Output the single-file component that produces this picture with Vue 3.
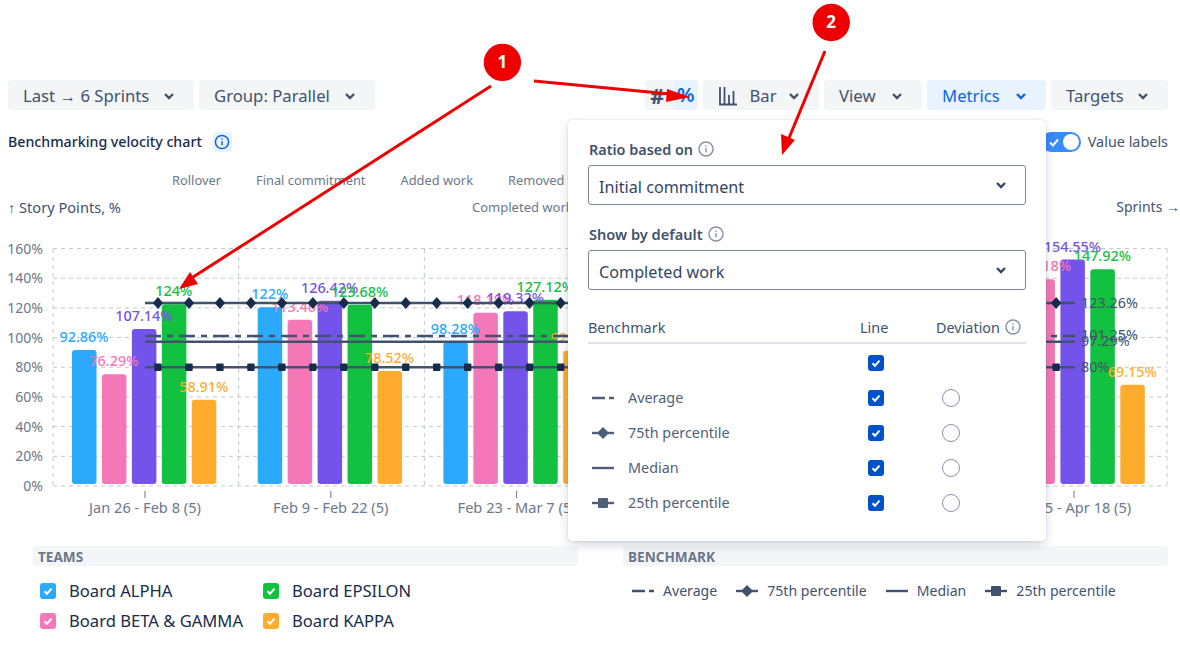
<template>
  <div class="page">
    <div class="toolbar">
      <button class="btn">Last → 6 Sprints <svg class="chev" viewBox="0 0 12 12"><path d="M2 4l4 4 4-4" /></svg></button>
      <button class="btn">Group: Parallel <svg class="chev" viewBox="0 0 12 12"><path d="M2 4l4 4 4-4" /></svg></button>
      <div class="spacer"></div>
      <div class="ratio"><span class="ratio-num">#</span><span class="ratio-pct">%</span></div>
      <button class="btn btn-bar">
        <svg class="bar-icon" viewBox="0 0 20 20"><path d="M2 1v17.5h17M6.5 1v17.5M11 9v9.5M15.5 5v13.5" /></svg>
        Bar <svg class="chev" viewBox="0 0 12 12"><path d="M2 4l4 4 4-4" /></svg>
      </button>
      <button class="btn btn-view">View <svg class="chev" viewBox="0 0 12 12"><path d="M2 4l4 4 4-4" /></svg></button>
      <button class="btn btn-active">Metrics <svg class="chev" viewBox="0 0 12 12"><path d="M2 4l4 4 4-4" /></svg></button>
      <button class="btn btn-targets">Targets <svg class="chev" viewBox="0 0 12 12"><path d="M2 4l4 4 4-4" /></svg></button>
    </div>

    <div class="title-row">
      <span class="title">Benchmarking velocity chart</span>
      <span class="title-info">
        <svg viewBox="0 0 16 16" width="16" height="16"><circle cx="8" cy="8" r="6.6" /><path d="M8 7.2v4M8 4.4v1.4" /></svg>
      </span>
      <div class="spacer"></div>
      <span class="toggle">
        <svg viewBox="0 0 12 12" width="12" height="12"><path d="M2 6.5l3 3 5-6" /></svg>
        <i class="knob"></i>
      </span>
      <span class="toggle-label">Value labels</span>
    </div>

    <div class="metric-row">
      <span v-for="m in metricNames" :key="m">{{ m }}</span>
    </div>

    <div class="axis-row">
      <span>↑ Story Points, %</span>
      <span class="axis-mid">Completed work</span>
      <span class="axis-end">Sprints →</span>
    </div>

    <svg class="chart" viewBox="0 230 1180 300" width="1180" height="300">
      <g class="grid">
        <line v-for="t in yTicks" :key="'h' + t" x1="53" x2="1167" :y1="yPos(t)" :y2="yPos(t)" />
        <line v-for="i in 7" :key="'v' + i" :x1="53 + (i - 1) * 185.67" :x2="53 + (i - 1) * 185.67" y1="249" y2="486" />
      </g>
      <text v-for="t in yTicks" :key="'yl' + t" class="y-label" x="43" :y="yPos(t) + 5">{{ t }}%</text>

      <g v-for="(g, gi) in groups" :key="g.label">
        <rect
          v-for="(v, i) in g.values"
          :key="i"
          :x="barX(gi, i)"
          :y="barTop(v)"
          width="24.5"
          :height="484 - barTop(v)"
          rx="3"
          :fill="colors[i]"
        />
        <line class="tick" :x1="145 + gi * 185.8" :x2="145 + gi * 185.8" y1="491" y2="498" />
        <text class="x-label" :x="145 + gi * 185.8" y="513">{{ g.label }}</text>
      </g>

      <g v-for="(g, gi) in groups" :key="'l' + g.label">
        <text
          v-for="(v, i) in g.values"
          :key="i"
          class="value"
          :x="barX(gi, i) + 12"
          :y="barTop(v) - 8"
          :fill="colors[i]"
        >{{ v }}%</text>
      </g>

      <g class="bench">
        <line x1="145" x2="1075" y1="303" y2="303" />
        <line x1="145" x2="1075" y1="336" y2="336" stroke-dasharray="16 6 6 6" />
        <line x1="145" x2="1075" y1="341.7" y2="341.7" />
        <line x1="145" x2="1075" y1="367.3" y2="367.3" />
      </g>
      <g v-for="x in markerXs" :key="x" class="marker">
        <path :d="`M${x} 297l5.2 6-5.2 6-5.2-6z`" />
        <rect :x="x - 3.7" y="363.6" width="7.4" height="7.4" rx="1" />
      </g>
      <text v-for="b in benchLabels" :key="b.text" class="bench-label" x="1081" :y="b.y">{{ b.text }}</text>
    </svg>

    <div class="legends">
      <section>
        <h4>TEAMS</h4>
        <div class="team-grid">
          <label v-for="t in teams" :key="t.name" class="team">
            <span class="team-check" :style="{ background: t.color }">
              <svg viewBox="0 0 12 12" width="12" height="12"><path d="M2.5 6.2l2.5 2.5 4.5-5" /></svg>
            </span>
            <span class="team-name">{{ t.name }}</span>
          </label>
        </div>
      </section>
      <section>
        <h4>BENCHMARK</h4>
        <div class="bench-legend">
          <span v-for="b in benchmarks" :key="b.name" class="bench-item">
            <svg class="glyph" viewBox="0 0 22 12" width="22" height="12"><path class="glyph-line" :d="b.line" /><path v-if="b.marker" class="glyph-mark" :d="b.marker" /></svg>
            {{ b.name }}
          </span>
        </div>
      </section>
    </div>

    <!-- metrics dropdown, open over the chart -->
    <div class="popover">
      <div class="field-label">Ratio based on
        <svg class="info" viewBox="0 0 16 16" width="16" height="16"><circle cx="8" cy="8" r="7" /><path d="M8 7.2v4M8 4.4v1.4" /></svg>
      </div>
      <div class="select">Initial commitment <svg class="chev" viewBox="0 0 12 12"><path d="M2 4l4 4 4-4" /></svg></div>
      <div class="field-label second">Show by default
        <svg class="info" viewBox="0 0 16 16" width="16" height="16"><circle cx="8" cy="8" r="7" /><path d="M8 7.2v4M8 4.4v1.4" /></svg>
      </div>
      <div class="select">Completed work <svg class="chev" viewBox="0 0 12 12"><path d="M2 4l4 4 4-4" /></svg></div>

      <div class="table-head">
        <span>Benchmark</span>
        <span>Line</span>
        <span class="dev">Deviation
          <svg class="info" viewBox="0 0 16 16" width="16" height="16"><circle cx="8" cy="8" r="7" /><path d="M8 7.2v4M8 4.4v1.4" /></svg>
        </span>
      </div>
      <div class="table-row">
        <span></span>
        <span class="cb"><svg viewBox="0 0 12 12" width="12" height="12"><path d="M2.5 6.2l2.5 2.5 4.5-5" /></svg></span>
        <span></span>
      </div>
      <div v-for="b in benchmarks" :key="b.name" class="table-row">
        <span class="row-name">
          <svg class="glyph" viewBox="0 0 22 12" width="22" height="12"><path class="glyph-line" :d="b.line" /><path v-if="b.marker" class="glyph-mark" :d="b.marker" /></svg>
          {{ b.name }}
        </span>
        <span class="cb"><svg viewBox="0 0 12 12" width="12" height="12"><path d="M2.5 6.2l2.5 2.5 4.5-5" /></svg></span>
        <span class="radio"></span>
      </div>
    </div>

    <!-- red annotations on top of the screenshot -->
    <svg class="notes" viewBox="0 0 1180 655" width="1180" height="655">
      <path class="note-line" d="M491 86L190 279" />
      <path class="note-head" d="M179 289l11-17 8 12z" />
      <path class="note-line" d="M534 81L670 94" />
      <path class="note-head" d="M690 97l-23-8-1 13z" />
      <path class="note-line" d="M825 51L789 138" />
      <path class="note-head" d="M782 155l-1-21 14 6z" />
      <circle cx="502.4" cy="62.4" r="18.7" />
      <circle cx="831.2" cy="22.5" r="18.7" />
      <text x="502.4" y="68">1</text>
      <text x="831.2" y="28">2</text>
    </svg>
  </div>
</template>

<script setup>
const metricNames = ['Rollover', 'Final commitment', 'Added work', 'Removed work']

const colors = ['#2aa9fd', '#f478b8', '#7353ea', '#12c13f', '#ffab2e']
const yTicks = [160, 140, 120, 100, 80, 60, 40, 20, 0]

const groups = [
  { label: 'Jan 26 - Feb 8 (5)', values: [92.86, 76.29, 107.14, 124, 58.91] },
  { label: 'Feb 9 - Feb 22 (5)', values: [122, 113.46, 126.42, 123.68, 78.52] },
  { label: 'Feb 23 - Mar 7 (5)', values: [98.28, 118.18, 119.32, 127.12, 92.37] },
  { label: 'Mar 8 - Mar 21 (5)', values: [104.5, 96.2, 118.4, 121.05, 84.1] },
  { label: 'Mar 22 - Apr 4 (5)', values: [110.3, 101.7, 125.6, 116.9, 75.4] },
  { label: 'Apr 5 - Apr 18 (5)', values: [126.8, 141.18, 154.55, 147.92, 69.15] }
]

const markerXs = Array.from({ length: 30 }, (_, i) => 158 + i * 30.97)

const benchLabels = [
  { text: '123.26%', y: 308 },
  { text: '101.25%', y: 340 },
  { text: '97.29%', y: 346 },
  { text: '80%', y: 372 }
]

const teams = [
  { name: 'Board ALPHA', color: '#2aa9fd' },
  { name: 'Board EPSILON', color: '#12c13f' },
  { name: 'Board BETA & GAMMA', color: '#f478b8' },
  { name: 'Board KAPPA', color: '#ffab2e' }
]

const benchmarks = [
  { name: 'Average', line: 'M0 6h13M17 6h5' },
  { name: '75th percentile', line: 'M0 6h22', marker: 'M11 0l6 6-6 6-6-6z' },
  { name: 'Median', line: 'M0 6h22' },
  { name: '25th percentile', line: 'M0 6h22', marker: 'M7 1h8a1 1 0 0 1 1 1v8a1 1 0 0 1-1 1H7a1 1 0 0 1-1-1V2a1 1 0 0 1 1-1z' }
]

const yPos = (t) => 486 - t * 1.484
const barTop = (v) => 486 - v * 1.465
const barX = (gi, i) => 72 + gi * 185.7 + i * 29.95
</script>

<style>
html, body {
  margin: 0;
  background: #fff;
}
</style>

<style scoped>
.page {
  position: relative;
  width: 1180px;
  height: 655px;
  overflow: hidden;
  box-sizing: border-box;
  padding: 80px 12px 0 8px;
  background: #fff;
  font-family: "Noto Sans", "Liberation Sans", sans-serif;
  color: #42526e;
}

.spacer {
  flex: 1;
}

.toolbar {
  display: flex;
  gap: 5px;
  height: 30px;
}

.btn {
  display: flex;
  align-items: center;
  justify-content: space-between;
  box-sizing: border-box;
  height: 30px;
  width: 186px;
  padding: 1px 19px 0 15px;
  border: 0;
  border-radius: 4px;
  background: #f4f5f7;
  color: #42526e;
  font: inherit;
  font-size: 16.7px;
}

.btn + .btn {
  width: 176px;
}

.btn.btn-bar {
  width: 116px;
  padding-left: 15px;
}

.btn.btn-view {
  width: 98px;
}

.btn.btn-active {
  width: 119px;
  background: #e9f2ff;
  color: #0c66e4;
}

.btn.btn-targets {
  width: 117px;
}

.chev {
  width: 12px;
  height: 12px;
  fill: none;
  stroke: currentColor;
  stroke-width: 2.4;
}

.bar-icon {
  width: 20px;
  height: 20px;
  fill: none;
  stroke: #42526e;
  stroke-width: 1.8;
}

.ratio {
  display: flex;
  width: 53px;
  height: 30px;
  border-radius: 4px;
  overflow: hidden;
  background: #f4f5f7;
  font-size: 22px;
  font-weight: 700;
  line-height: 30px;
  text-align: center;
}

.ratio-num {
  flex: 1;
  padding-right: 4px;
}

.ratio-pct {
  flex: 1;
  background: #e9f2ff;
  color: #0c66e4;
  font-size: 20px;
  font-weight: 600;
}

.title-row {
  display: flex;
  align-items: center;
  height: 20px;
  margin-top: 22px;
}

.title {
  margin-bottom: 2px;
  color: #172b4d;
  font-size: 14.2px;
  font-weight: 500;
}

.title-info {
  display: flex;
  align-items: center;
  justify-content: center;
  width: 19px;
  height: 20px;
  margin-left: 11px;
  background: #e9f2ff;
  border-radius: 3px;
}

.title-info svg {
  fill: none;
  stroke: #0c66e4;
  stroke-width: 1.5;
}

.toggle {
  position: relative;
  display: flex;
  align-items: center;
  box-sizing: border-box;
  width: 40px;
  height: 20px;
  padding-left: 7px;
  border-radius: 10px;
  background: #388bff;
}

.toggle svg {
  fill: none;
  stroke: #fff;
  stroke-width: 2;
}

.knob {
  position: absolute;
  right: 2px;
  top: 2px;
  width: 16px;
  height: 16px;
  border-radius: 50%;
  background: #fff;
}

.toggle-label {
  margin: 0 0 2px 7px;
  font-size: 14.4px;
}

.metric-row {
  display: flex;
  gap: 35px;
  height: 18px;
  margin-top: 19px;
  padding-left: 164px;
  color: #6b778c;
  font-size: 12.85px;
  line-height: 18px;
}

.axis-row {
  position: relative;
  display: flex;
  height: 20px;
  margin: 8px -12px 0 0;
  font-size: 14.6px;
  line-height: 20px;
}

.axis-mid {
  margin-left: 351px;
  color: #6b778c;
  font-size: 13px;
}

.axis-end {
  margin-left: auto;
  font-size: 14px;
  white-space: nowrap;
}

.chart {
  display: block;
  margin: 13px 0 0 -8px;
}

.grid line {
  stroke: #c1c7d0;
  stroke-width: 1;
  stroke-dasharray: 4 4;
}

.y-label {
  fill: #6b778c;
  font-size: 14px;
  text-anchor: end;
}

.x-label {
  fill: #6b778c;
  font-size: 14.6px;
  text-anchor: middle;
}

.tick {
  stroke: #6b778c;
  stroke-width: 1;
}

.value {
  font-size: 14.4px;
  font-weight: 500;
  text-anchor: middle;
}

.bench line {
  stroke: #42526e;
  stroke-width: 2.5;
}

.marker {
  fill: #172b4d;
}

.bench-label {
  fill: #42526e;
  font-size: 14.4px;
}

.legends {
  display: grid;
  grid-template-columns: 545px 545px;
  gap: 45px;
  margin: 16px 0 0 25px;
}

.legends h4 {
  height: 20px;
  margin: 0;
  padding: 1px 0 0 5px;
  box-sizing: border-box;
  border-radius: 3px;
  background: #f4f5f7;
  color: #6b778c;
  font-size: 13.6px;
  font-weight: 700;
  line-height: 20px;
}

.team-grid {
  display: grid;
  grid-template-columns: 223px auto;
  gap: 10px 0;
  margin: 15px 0 0 7px;
}

.team {
  display: flex;
  align-items: center;
  gap: 13px;
  height: 20px;
  color: #172b4d;
  font-size: 16.6px;
  white-space: nowrap;
}

.team-name {
  margin-bottom: 2px;
}

.team-check {
  display: flex;
  align-items: center;
  justify-content: center;
  width: 16px;
  height: 16px;
  border-radius: 3px;
}

.team-check svg,
.cb svg {
  fill: none;
  stroke: #fff;
  stroke-width: 2;
}

.bench-legend {
  display: flex;
  gap: 19px;
  margin: 15px 0 0 9px;
  font-size: 14.1px;
  line-height: 20px;
}

.bench-item {
  display: flex;
  align-items: center;
  gap: 9px;
}

.glyph-line {
  fill: none;
  stroke: currentColor;
  stroke-width: 2.4;
}

.glyph-mark {
  fill: currentColor;
}

.popover {
  position: absolute;
  left: 568px;
  top: 120px;
  box-sizing: border-box;
  width: 478px;
  height: 421px;
  padding: 19px 20px 0;
  border-radius: 4px;
  background: #fff;
  box-shadow: 0 4px 12px -2px rgba(9, 30, 66, 0.25), 0 0 1px rgba(9, 30, 66, 0.31);
}

.field-label {
  display: flex;
  align-items: center;
  gap: 5px;
  height: 20px;
  margin-bottom: 6px;
  padding-left: 1px;
  font-size: 14.4px;
  font-weight: 600;
}

.field-label.second {
  margin-top: 19px;
  margin-bottom: 6px;
  font-size: 14.6px;
}

.info {
  fill: none;
  stroke: #8993a4;
  stroke-width: 1.5;
}

.select {
  display: flex;
  align-items: center;
  justify-content: space-between;
  box-sizing: border-box;
  height: 40px;
  padding: 3px 18px 0 10px;
  border: 1px solid #7a869a;
  border-radius: 3px;
  color: #344563;
  font-size: 16.2px;
}

.select .chev {
  margin-top: -3px;
}

.table-head,
.table-row {
  display: grid;
  grid-template-columns: 272px 76px 1fr;
  align-items: center;
}

.table-head {
  height: 30px;
  margin-top: 22px;
  border-bottom: 2px solid #dfe1e6;
  font-size: 14.4px;
}

.dev {
  display: flex;
  align-items: center;
  gap: 5px;
}

.table-row {
  height: 35px;
  color: #505f79;
  font-size: 14.4px;
}

.table-head + .table-row {
  margin-top: 1px;
}

.row-name {
  display: flex;
  align-items: center;
  gap: 14px;
  padding-left: 4px;
}

.cb {
  display: flex;
  align-items: center;
  justify-content: center;
  width: 16px;
  height: 16px;
  margin-left: 8px;
  border-radius: 3px;
  background: #0052cc;
}

.radio {
  box-sizing: border-box;
  width: 18px;
  height: 18px;
  margin-left: 6px;
  border: 1px solid #8993a4;
  border-radius: 50%;
}

.notes {
  position: absolute;
  left: 0;
  top: 0;
  pointer-events: none;
}

.notes circle {
  fill: #ee0000;
}

.notes text {
  fill: #fff;
  font-size: 17px;
  font-weight: 700;
  text-anchor: middle;
}

.note-line {
  fill: none;
  stroke: #ee0000;
  stroke-width: 3;
}

.note-head {
  fill: #ee0000;
}
</style>
